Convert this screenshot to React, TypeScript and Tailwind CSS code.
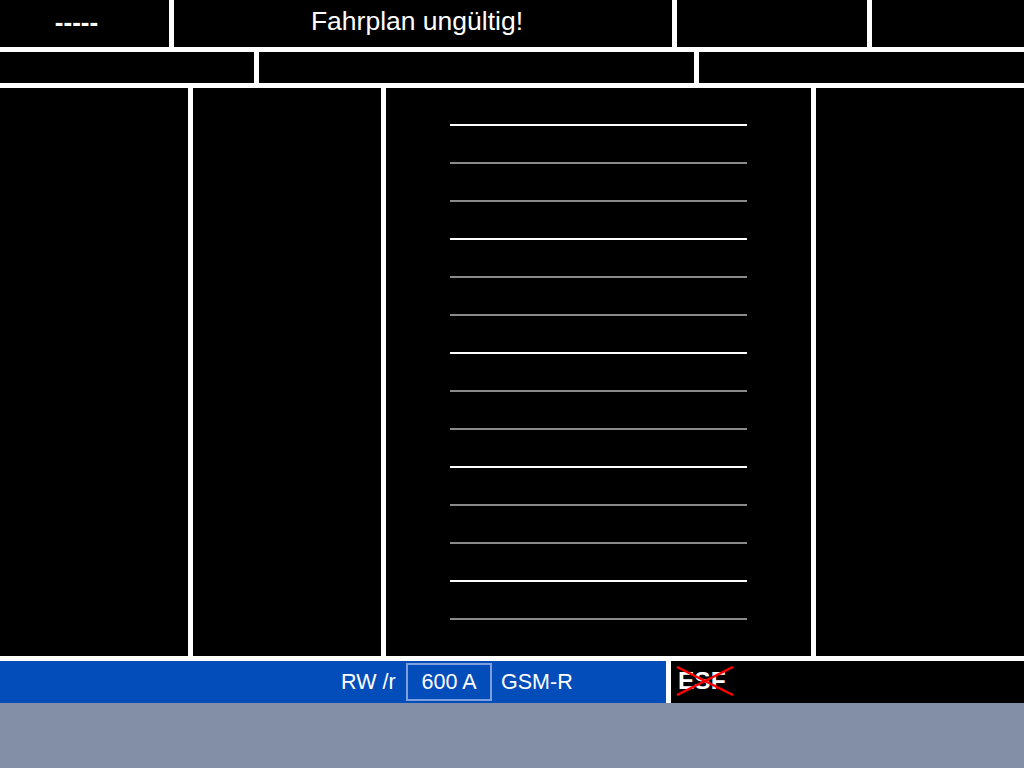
import React from "react";

const lines = ["w", "g", "g", "w", "g", "g", "w", "g", "g", "w", "g", "g", "w", "g"];

export default function App() {
  return (
    <div
      className="w-[1024px] h-[768px] flex flex-col bg-white text-white overflow-hidden"
      style={{ fontFamily: '"Liberation Sans", Arial, sans-serif' }}
    >
      {/* Row 1 */}
      <div className="flex gap-[5px] h-[47px] shrink-0">
        <div className="w-[169px] bg-black flex items-center justify-center pr-[16px] pb-[4px] text-[26px] font-bold leading-none">
          -----
        </div>
        <div className="w-[498px] bg-black flex items-center justify-center pr-[12px] pb-[4px] text-[26.5px]">
          Fahrplan ungültig!
        </div>
        <div className="w-[190px] bg-black" />
        <div className="flex-1 bg-black" />
      </div>

      {/* Row 2 */}
      <div className="flex gap-[5px] h-[31px] mt-[5px] shrink-0">
        <div className="w-[254px] bg-black" />
        <div className="w-[435px] bg-black" />
        <div className="flex-1 bg-black" />
      </div>

      {/* Main row */}
      <div className="flex gap-[5px] h-[568px] mt-[5px] shrink-0">
        <div className="w-[188px] bg-black" />
        <div className="w-[188px] bg-black" />
        <div className="w-[425px] bg-black flex flex-col items-center pt-[36px] gap-[36px]">
          {lines.map((c, i) => (
            <div
              key={i}
              className={`w-[297px] h-[2px] ${c === "w" ? "bg-white" : "bg-[#8a8a8a]"}`}
            />
          ))}
        </div>
        <div className="flex-1 bg-black" />
      </div>

      {/* Bottom bar */}
      <div className="flex gap-[5px] h-[42px] mt-[5px] shrink-0">
        <div className="w-[666px] bg-[#034dbb] flex items-center pl-[341px] text-[21.5px]">
          <span className="w-[65px]">RW /r</span>
          <div className="w-[86px] h-[38px] border-2 border-[#7fa0dc] flex items-center justify-center">
            600 A
          </div>
          <span className="ml-[9px]">GSM-R</span>
        </div>
        <div className="flex-1 bg-black flex items-center pl-[7px]">
          <div className="relative">
            <span className="text-[24.5px] font-bold leading-none">ESF</span>
            <svg
              className="absolute left-[-2px] top-[-3px]"
              width="58"
              height="30"
              viewBox="0 0 58 30"
            >
              <line x1="1" y1="1" x2="57" y2="29" stroke="#ff0000" strokeWidth="2.5" />
              <line x1="1" y1="29" x2="57" y2="1" stroke="#ff0000" strokeWidth="2.5" />
            </svg>
          </div>
        </div>
      </div>

      {/* Grey footer */}
      <div className="h-[65px] bg-[#828fa7] shrink-0" />
    </div>
  );
}
